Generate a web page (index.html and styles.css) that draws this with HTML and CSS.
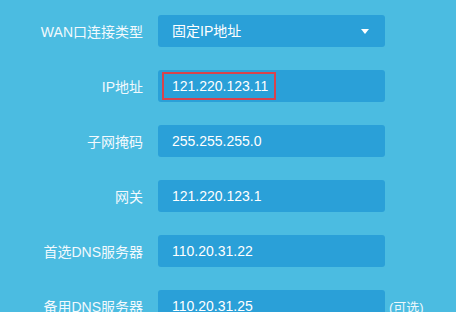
FILE: index.html
```html
<!DOCTYPE html>
<html>
<head>
<meta charset="utf-8">
<link rel="stylesheet" href="styles.css">
</head>
<body>
<div class="form">
  <div class="row">
    <div class="label">WAN口连接类型</div>
    <div class="field select">固定IP地址<span class="arrow"></span></div>
  </div>
  <div class="row">
    <div class="label">IP地址</div>
    <div class="field">121.220.123.11<span class="mark"></span></div>
  </div>
  <div class="row">
    <div class="label">子网掩码</div>
    <div class="field">255.255.255.0</div>
  </div>
  <div class="row">
    <div class="label">网关</div>
    <div class="field">121.220.123.1</div>
  </div>
  <div class="row">
    <div class="label">首选DNS服务器</div>
    <div class="field">110.20.31.22</div>
  </div>
  <div class="row">
    <div class="label">备用DNS服务器</div>
    <div class="field">110.20.31.25</div>
    <div class="hint">(可选)</div>
  </div>
</div>
</body>
</html>
```

FILE: styles.css
```css
html, body {
  margin: 0;
  padding: 0;
  background: #4bbce1;
  overflow: hidden;
}
body {
  width: 456px;
  height: 312px;
  font-family: "Liberation Sans", "Noto Sans CJK SC", sans-serif;
  color: #ffffff;
}
.form {
  display: flex;
  flex-direction: column;
  gap: 23px;
  padding-top: 15px;
}
.row {
  display: flex;
  align-items: center;
  height: 32px;
}
.label {
  width: 143px;
  text-align: right;
  font-size: 14px;
  color: #f2f9fd;
  flex: none;
}
.field {
  position: relative;
  margin-left: 15px;
  width: 227px;
  height: 32px;
  box-sizing: border-box;
  padding-left: 14px;
  background: #2aa0d8;
  border-radius: 3px;
  font-size: 14px;
  line-height: 32px;
  flex: none;
}
.arrow {
  position: absolute;
  right: 16px;
  top: 14px;
  width: 0;
  height: 0;
  border-left: 4.5px solid transparent;
  border-right: 4.5px solid transparent;
  border-top: 5px solid #ffffff;
}
.mark {
  position: absolute;
  left: 4px;
  top: 2px;
  width: 114px;
  height: 28px;
  box-sizing: border-box;
  border: 2px solid #d8434d;
}
.hint {
  margin-left: 4px;
  font-size: 13px;
  color: #eef8fc;
}
```
